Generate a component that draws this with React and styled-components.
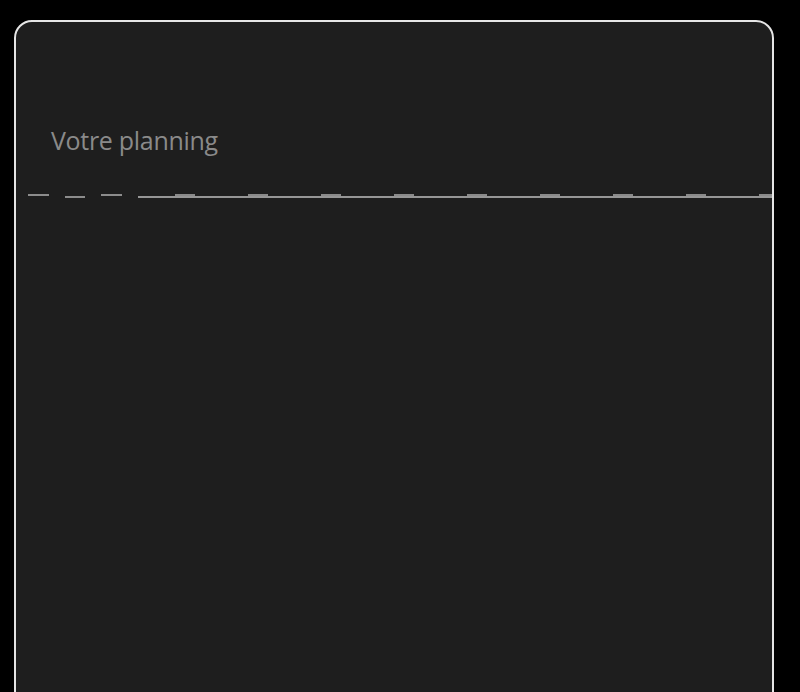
import React from "react";
import styled, { createGlobalStyle } from "styled-components";

const Global = createGlobalStyle`
  html, body { margin: 0; padding: 0; background: #000; overflow: hidden; }
  body { font-family: "Open Sans", "Liberation Sans", sans-serif; }
`;

const Page = styled.div`
  height: 692px;
  overflow: hidden;
  padding: 20px 26px 0 14px;
  box-sizing: border-box;
`;

const Card = styled.section`
  height: 720px;
  background: #1e1e1e;
  border: 2px solid #e6e6e6;
  border-radius: 18px;
  box-sizing: border-box;
  display: flex;
  flex-direction: column;
`;

const Header = styled.header`
  padding: 106px 0 0 35px;
`;

const Title = styled.h2`
  margin: 0;
  font-family: "Open Sans", "Liberation Sans", sans-serif;
  font-weight: 400;
  font-size: 25px;
  line-height: 24px;
  color: #8a8a8a;
  letter-spacing: -0.3px;
`;

const Divider = styled.div`
  margin: 42px 0 0 12px;
  height: 4px;
  position: relative;
  background:
    linear-gradient(#8c8c8c, #8c8c8c) 0 0 / 21px 2px no-repeat,
    linear-gradient(#8c8c8c, #8c8c8c) 37px 2px / 20px 2px no-repeat,
    linear-gradient(#8c8c8c, #8c8c8c) 73px 0 / 21px 2px no-repeat,
    linear-gradient(#969696, #969696) 110px 2px / 100% 2px no-repeat;
`;

const Bumps = styled.div`
  position: absolute;
  left: 147px;
  right: 0;
  top: 0;
  height: 2px;
  background: repeating-linear-gradient(
    to right,
    #8a8a8a 0,
    #8a8a8a 20px,
    transparent 20px,
    transparent 73px
  );
`;

export default function App() {
  return (
    <>
      <Global />
      <Page>
        <Card>
          <Header>
            <Title>Votre planning</Title>
          </Header>
          <Divider>
            <Bumps />
          </Divider>
        </Card>
      </Page>
    </>
  );
}
